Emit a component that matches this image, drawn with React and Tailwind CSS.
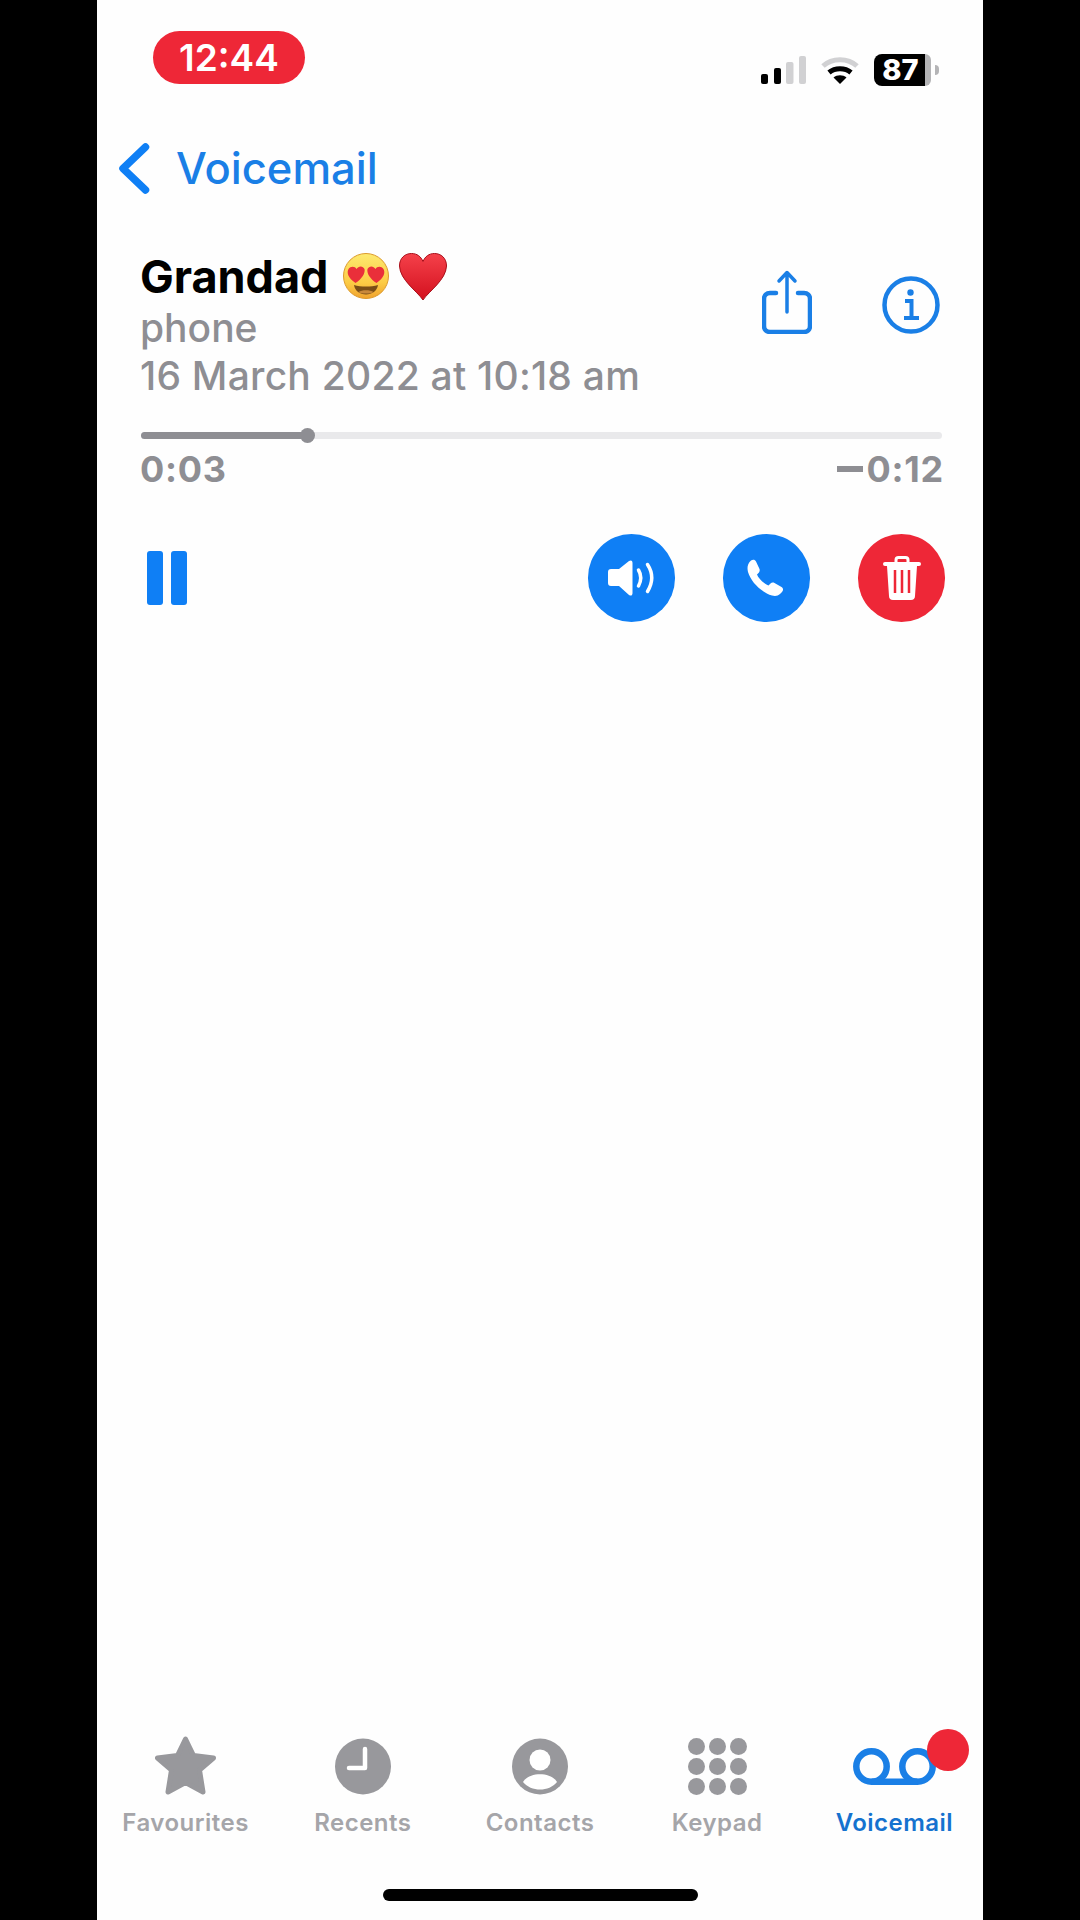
const font = { fontFamily: "Inter, 'Liberation Sans', sans-serif" };

function Signal() {
  return (
    <svg width="45" height="28" viewBox="0 0 45 28">
      <rect x="0" y="18" width="7" height="10" rx="2" fill="#000" />
      <rect x="13" y="12" width="7" height="16" rx="2" fill="#000" />
      <rect x="25" y="6" width="7.5" height="22" rx="2" fill="#d1d1d3" />
      <rect x="38" y="0" width="7" height="28" rx="2" fill="#d1d1d3" />
    </svg>
  );
}

function Wifi() {
  return (
    <svg width="38" height="28" viewBox="0 0 38 28" fill="none">
      <path d="M2 10 C11 1.5 27 1.5 36 10" stroke="#d1d1d3" strokeWidth="5" />
      <path d="M8 16.5 C14 11.5 24 11.5 30 16.5" stroke="#000" strokeWidth="5" />
      <path d="M19 28 L12.5 21.5 C16 18.5 22 18.5 25.5 21.5 Z" fill="#000" />
    </svg>
  );
}

function Battery() {
  return (
    <div className="flex items-center gap-[4px]">
      <div className="flex h-[32px]">
        <div className="flex w-[51px] items-center justify-center rounded-l-[8px] bg-black pl-[2px] text-[29px] leading-[32px] font-extrabold text-white">
          87
        </div>
        <div className="w-[6px] rounded-r-[8px] bg-[#b4b4b6]" />
      </div>
      <div className="h-[10px] w-[4px] rounded-r-full bg-[#b4b4b6]" />
    </div>
  );
}

function ShareIcon() {
  return (
    <svg width="50" height="64" viewBox="0 0 50 64" fill="none" stroke="#1a7fe6" strokeWidth="4.5" strokeLinecap="round" strokeLinejoin="round">
      <path d="M14 23 H8 C4.5 23 2 25.5 2 29 V56 C2 59.5 4.5 62 8 62 H42 C45.5 62 48 59.5 48 56 V29 C48 25.5 45.5 23 42 23 H36" />
      <path d="M25 42 V3 M17 11 L25 2.5 L33 11" strokeWidth="3.5" />
    </svg>
  );
}

function InfoIcon() {
  return (
    <svg width="58" height="58" viewBox="0 0 58 58" fill="none">
      <circle cx="29" cy="29" r="26.5" stroke="#1a7fe6" strokeWidth="4.5" />
      <circle cx="28.5" cy="16.5" r="3.2" fill="#1a7fe6" />
      <path d="M23 25 H29.5 V41 M22 42 H37" stroke="#1a7fe6" strokeWidth="4" />
    </svg>
  );
}

function SpeakerIcon() {
  return (
    <svg width="87" height="88" viewBox="0 0 87 88" fill="none">
      <path d="M23 35 H31 L41 27 C43.5 25.5 44.5 27 44.5 29 V59 C44.5 61 43.5 62.5 41 61 L31 52 H23 C21 52 20 51 20 49 V38 C20 36 21 35 23 35 Z" fill="#fff" />
      <path d="M50.5 36 Q55 43.5 50.5 52" stroke="#fff" strokeWidth="3.5" strokeLinecap="round" />
      <path d="M59.5 30.5 Q68 43.5 59.5 57.5" stroke="#fff" strokeWidth="3.5" strokeLinecap="round" />
    </svg>
  );
}

function PhoneIcon() {
  return (
    <svg width="87" height="88" viewBox="0 0 87 88">
      <path
        d="M28 26.5 C30 25 32 25.5 33 27.5 L36.5 35 C37 36.5 36.5 38 35.5 39 L34 40.5 C35.5 44.5 41 50 45.5 51.5 L47.5 49.5 C48.5 48.5 50 48.3 51.5 49 L58.5 53 C60.5 54.2 60.5 56.5 59 58 L57 60 C55 62 52 62.5 49 61.5 C38 58 28 48 25 38 C24 34 24.3 30 28 26.5 Z"
        fill="#fff"
      />
    </svg>
  );
}

function TrashIcon() {
  return (
    <svg width="38" height="44" viewBox="0 0 38 44" fill="none">
      <path d="M13 7 V4 C13 2.5 14 1.5 15.5 1.5 H22.5 C24 1.5 25 2.5 25 4 V7" stroke="#fff" strokeWidth="3" />
      <rect x="0" y="6" width="38" height="4" rx="2" fill="#fff" />
      <path d="M4 10 H34 L32 40 C32 42.5 30.5 44 28 44 H10 C7.5 44 6 42.5 6 40 Z" fill="#fff" />
      <path d="M12 14 V37 M19 14 V37 M26 14 V37" stroke="#ee2737" strokeWidth="2.5" />
    </svg>
  );
}

function StarIcon() {
  return (
    <svg width="61" height="60" viewBox="0 0 61 60">
      <path d="M30.5 3 L38.5 19.5 L58.5 22 L44.5 34 L48 56 L30.5 46.5 L13 56 L16.5 34 L2.5 22 L22.5 19.5 Z" fill="#98989c" stroke="#98989c" strokeWidth="5" strokeLinejoin="round" />
    </svg>
  );
}

function ClockIcon() {
  return (
    <svg width="56" height="57" viewBox="0 0 56 57" fill="none">
      <circle cx="28" cy="28.5" r="28" fill="#98989c" />
      <path d="M30 11 V30 H14" stroke="#fff" strokeWidth="4.5" strokeLinecap="round" strokeLinejoin="round" />
    </svg>
  );
}

function ContactIcon() {
  return (
    <svg width="56" height="57" viewBox="0 0 56 57">
      <circle cx="28" cy="28.5" r="28" fill="#98989c" />
      <circle cx="28" cy="22" r="10.5" fill="#fff" />
      <path d="M11 44 C17 33.5 39 33.5 45 44 C37 54 19 54 11 44 Z" fill="#fff" />
    </svg>
  );
}

function KeypadIcon() {
  const spots = [8.5, 29.5, 50.5];
  return (
    <svg width="59" height="57" viewBox="0 0 59 57" fill="#98989c">
      {spots.map((x) =>
        [8.5, 28.5, 48.5].map((y) => <circle key={`${x}-${y}`} cx={x} cy={y} r="8.5" />)
      )}
    </svg>
  );
}

function VoicemailIcon() {
  return (
    <svg width="83" height="37" viewBox="0 0 83 37" fill="none" stroke="#1a7fe6" strokeWidth="6.5">
      <circle cx="18.5" cy="18.5" r="15.2" />
      <circle cx="64.5" cy="18.5" r="15.2" />
      <path d="M18.5 33.7 H64.5" />
    </svg>
  );
}

function HeartEyes() {
  return (
    <svg width="46" height="46" viewBox="0 0 46 46">
      <defs>
        <linearGradient id="face" x1="0" y1="0" x2="0" y2="1">
          <stop offset="0%" stopColor="#fdea70" />
          <stop offset="65%" stopColor="#fccb45" />
          <stop offset="100%" stopColor="#f0a22e" />
        </linearGradient>
      </defs>
      <circle cx="23" cy="23" r="22.5" fill="url(#face)" stroke="#dc9a2c" strokeWidth="1" />
      <path d="M11 32 C18 34 28 34 35 32 C34 38 29 41.5 23 41.5 C17 41.5 12 38 11 32 Z" fill="#7a4e16" />
      <path d="M15.5 39 C19 36.5 27 36.5 30.5 39 C28 41 18 41 15.5 39 Z" fill="#c9883a" />
      <path d="M12.5 30 C5 25 3.5 19.5 5.5 16 C7.5 13 12 13 13.5 16 C15.5 12.5 20 12.5 21.5 16 C22.5 20 19 26 12.5 30 Z" fill="#ea2f3a" />
      <path d="M33.5 30 C41 25 42.5 19.5 40.5 16 C38.5 13 34 13 32.5 16 C30.5 12.5 26 12.5 24.5 16 C23.5 20 27 26 33.5 30 Z" fill="#ea2f3a" />
    </svg>
  );
}

function Heart() {
  return (
    <svg width="48" height="48" viewBox="0 0 48 48">
      <defs>
        <linearGradient id="heart" x1="0" y1="0" x2="0" y2="1">
          <stop offset="0%" stopColor="#f5414a" />
          <stop offset="100%" stopColor="#d3101e" />
        </linearGradient>
      </defs>
      <path d="M24 47 C18 38 1 27 0.5 13 C0.5 5 6 0.5 12.5 0.5 C18 0.5 22 3.5 24 8.5 C26 3.5 30 0.5 35.5 0.5 C42 0.5 47.5 5 47.5 13 C47 27 30 38 24 47 Z" fill="url(#heart)" stroke="#a80d18" strokeWidth="1" />
    </svg>
  );
}

const tabs = [
  { label: "Favourites", icon: <StarIcon /> },
  { label: "Recents", icon: <ClockIcon /> },
  { label: "Contacts", icon: <ContactIcon /> },
  { label: "Keypad", icon: <KeypadIcon /> },
  { label: "Voicemail", icon: <VoicemailIcon />, active: true },
];

export default function App() {
  return (
    <div className="flex h-[1920px] w-[1080px] justify-center overflow-hidden bg-black" style={font}>
      <div className="flex h-full w-[886px] flex-col bg-[#fefefe]">
        {/* status bar */}
        <div className="flex h-[143px] items-start justify-between pt-[31px] pr-[44px] pl-[56px]">
          <div className="flex h-[53px] w-[152px] items-center justify-center rounded-full bg-[#ee2737] text-[37px] font-semibold text-white">
            12:44
          </div>
          <div className="mt-[23px] flex items-center gap-[15px]">
            <Signal />
            <Wifi />
            <Battery />
          </div>
        </div>

        {/* back */}
        <div className="flex h-[110px] items-start gap-[26px] pl-[22px]">
          <svg width="31" height="51" viewBox="0 0 31 51" fill="none" stroke="#0f7ff5" strokeWidth="7.5" strokeLinecap="round" strokeLinejoin="round">
            <path d="M26.5 4 L4 25.5 L26.5 47" />
          </svg>
          <span className="text-[43.5px] leading-[50px] font-medium text-[#1a7fe6]">Voicemail</span>
        </div>

        {/* info */}
        <div className="flex items-start justify-between pr-[43px] pl-[43px]">
          <div>
            <div className="flex h-[48px] items-center text-[45px] font-bold text-black">
              <span>Grandad</span>
              <span className="ml-[15px] flex gap-[10px]">
                <HeartEyes />
                <Heart />
              </span>
            </div>
            <div className="mt-[3px] text-[39px] leading-[48px] font-medium text-[#8e8e93]">phone</div>
            <div className="text-[39px] leading-[47px] font-medium tracking-[0.006em] whitespace-nowrap text-[#8e8e93]">16 March 2022 at 10:18 am</div>
          </div>
          <div className="mt-[17px] flex items-end gap-[70px]">
            <ShareIcon />
            <InfoIcon />
          </div>
        </div>

        {/* scrubber */}
        <div className="mt-[33px] pr-[41px] pl-[44px]">
          <div className="relative h-[7px] w-[801px] rounded-full bg-[#e9e9eb]">
            <div className="h-full w-[167px] rounded-full bg-[#8e8e93]" />
            <div className="absolute top-[-4px] left-[159px] h-[15px] w-[15px] rounded-full bg-[#8e8e93]" />
          </div>
          <div className="mt-[8px] flex w-[803px] justify-between text-[36px] leading-[44px] font-bold tracking-[0.02em] text-[#8e8e93]">
            <span className="-ml-[1px]">0:03</span>
            <span className="flex items-center gap-[4px]">
              <span className="h-[6px] w-[26px] bg-[#8e8e93]" />
              0:12
            </span>
          </div>
        </div>

        {/* controls */}
        <div className="mt-[43px] flex items-center justify-between pr-[38px] pl-[50px]">
          <div className="flex gap-[8px]">
            <div className="h-[54px] w-[16px] rounded-[3px] bg-[#0f7ff5]" />
            <div className="h-[54px] w-[16px] rounded-[3px] bg-[#0f7ff5]" />
          </div>
          <div className="flex gap-[48px]">
            <div className="flex h-[88px] w-[87px] items-center justify-center rounded-full bg-[#0f7ff5]">
              <SpeakerIcon />
            </div>
            <div className="flex h-[88px] w-[87px] items-center justify-center rounded-full bg-[#0f7ff5]">
              <PhoneIcon />
            </div>
            <div className="flex h-[88px] w-[87px] items-center justify-center rounded-full bg-[#ee2737]">
              <TrashIcon />
            </div>
          </div>
        </div>

        {/* tab bar */}
        <div className="mt-auto grid grid-cols-5">
          {tabs.map((t) => (
            <div key={t.label} className="flex flex-col items-center">
              <div className="relative flex h-[60px] items-center justify-center">
                {t.icon}
                {t.active && (
                  <div className="absolute top-[-7px] left-[74px] h-[42px] w-[42px] rounded-full bg-[#ee2737]" />
                )}
              </div>
              <span
                className={`mt-[12px] text-[24px] leading-[30px] font-semibold tracking-[0.02em] whitespace-nowrap ${
                  t.active ? "text-[#1572cf]" : "text-[#a5a5a9]"
                }`}
              >
                {t.label}
              </span>
            </div>
          ))}
        </div>

        {/* home indicator */}
        <div className="mt-[51px] mb-[19px] flex justify-center">
          <div className="h-[12px] w-[315px] rounded-full bg-black" />
        </div>
      </div>
    </div>
  );
}
